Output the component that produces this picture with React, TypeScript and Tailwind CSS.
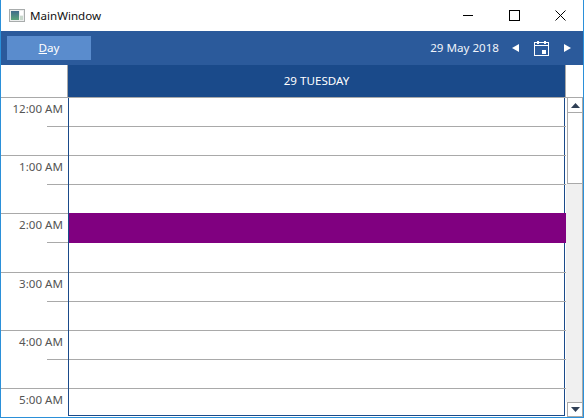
import React from 'react'

// Row heights come from the screenshot: the grid lines are not evenly spaced
const rows = [
  { h: 28, label: '12:00 AM', line: 'half' },
  { h: 28, line: 'hour' },
  { h: 28, label: '1:00 AM', line: 'half' },
  { h: 28, line: 'event' },
  { h: 28, label: '2:00 AM', event: true, line: 'eventHalf' },
  { h: 29, line: 'hour' },
  { h: 28, label: '3:00 AM', line: 'half' },
  { h: 28, line: 'hour' },
  { h: 28, label: '4:00 AM', line: 'half' },
  { h: 28, line: 'hour' },
  { h: 26, label: '5:00 AM' },
]

function WindowIcon() {
  return (
    <svg width="16" height="13" viewBox="0 0 16 13">
      <defs>
        <linearGradient id="pane" x1="0" y1="0" x2="0" y2="1">
          <stop offset="0" stopColor="#3f6a8c" />
          <stop offset="1" stopColor="#5aa37a" />
        </linearGradient>
      </defs>
      <rect x="0.5" y="0.5" width="15" height="12" fill="#eceeee" stroke="#a8acac" />
      <rect x="2" y="2" width="8" height="9" fill="url(#pane)" />
      <rect x="11" y="2" width="3" height="4" fill="#ffffff" />
      <rect x="11" y="7" width="3" height="4" fill="#c8d8cc" />
    </svg>
  )
}

function CalendarIcon() {
  return (
    <svg width="15" height="15" viewBox="0 0 15 15" fill="none">
      <rect x="0.5" y="1.5" width="14" height="13" stroke="#ffffff" />
      <path d="M0 4.5 H15" stroke="#ffffff" />
      <rect x="3" y="0" width="2" height="3" fill="#ffffff" />
      <rect x="10" y="0" width="2" height="3" fill="#ffffff" />
      <rect x="8" y="9" width="4" height="4" fill="#ffffff" />
    </svg>
  )
}

function Arrow({ dir }: { dir: 'left' | 'right' }) {
  return (
    <svg width="7" height="8" viewBox="0 0 7 8" className="block">
      <polygon points={dir === 'left' ? '7,0 7,8 0,4' : '0,0 0,8 7,4'} fill="#ffffff" />
    </svg>
  )
}

function ScrollGlyph({ up }: { up?: boolean }) {
  return (
    <svg width="9" height="5" viewBox="0 0 9 5">
      <polygon points={up ? '4.5,0 9,5 0,5' : '0,0 9,0 4.5,5'} fill="#2f3f55" />
    </svg>
  )
}

function GridLine({ kind }: { kind: string }) {
  const half = kind === 'half' || kind === 'eventHalf'
  const purple = kind === 'event' || kind === 'eventHalf'
  return (
    <div className="flex h-px">
      <div className={half ? 'ml-[46px] w-[21px] bg-[#a9a9a9]' : 'w-[67px] bg-[#a9a9a9]'} />
      <div className="w-px bg-[#1a4a8a]" />
      <div className={`flex-1 ${purple ? 'bg-[#800080]' : 'bg-[#a9a9a9]'}`} />
    </div>
  )
}

export default function App() {
  return (
    <div className="flex flex-col w-[584px] h-[418px] overflow-hidden bg-white border-x border-b border-[#2b90d9] font-['Noto_Sans',sans-serif] text-[11.6px]">
      {/* Title bar */}
      <div className="flex items-center h-[31px] shrink-0 pl-[8px]">
        <WindowIcon />
        <span className="ml-[5px] text-[#111]">MainWindow</span>
        <div className="flex items-center ml-auto">
          <div className="flex items-center justify-center w-[46px] h-[31px]">
            <div className="w-[10px] h-px bg-black" />
          </div>
          <div className="flex items-center justify-center w-[46px] h-[31px]">
            <div className="w-[11px] h-[11px] border border-black" />
          </div>
          <div className="flex items-center justify-center w-[46px] h-[31px]">
            <svg width="11" height="11" viewBox="0 0 11 11">
              <path d="M0.5 0.5 L10.5 10.5 M10.5 0.5 L0.5 10.5" stroke="#000" strokeWidth="1" />
            </svg>
          </div>
        </div>
      </div>

      {/* Toolbar */}
      <div className="flex items-center h-[34px] shrink-0 bg-[#2b5a9b] pl-[6px] pr-[12px] text-white">
        <div className="flex items-center justify-center w-[84px] h-[24px] bg-[#5a8ccd]">
          <span><span className="underline">D</span>ay</span>
        </div>
        <span className="ml-auto text-[#f0f4fa]">29 May 2018</span>
        <div className="ml-[13px]"><Arrow dir="left" /></div>
        <div className="ml-[15px]"><CalendarIcon /></div>
        <div className="ml-[15px]"><Arrow dir="right" /></div>
      </div>

      {/* Day header */}
      <div className="flex h-[33px] shrink-0 border-b border-[#a9a9a9]">
        <div className="w-[67px] border-r border-[#a9a9a9]" />
        <div className="flex items-center justify-center w-[497px] bg-[#1a4a8a] text-white">29 TUESDAY</div>
        <div className="w-px bg-[#a9a9a9]" />
      </div>

      {/* Body */}
      <div className="flex flex-1 min-h-0">
        <div className="w-[565px] shrink-0">
          {rows.map((r, i) => (
            <div key={i}>
              <div className="flex" style={{ height: r.h }}>
                <div className="w-[67px] pr-[5px] pt-[2px] text-right leading-[17px] text-[#555]">{r.label}</div>
                {r.event ? (
                  <div className="w-[498px] border-l border-[#1a4a8a] bg-[#800080]" />
                ) : (
                  <div className="w-[497px] border-x border-[#1a4a8a]" />
                )}
              </div>
              {r.line && <GridLine kind={r.line} />}
            </div>
          ))}
          <div className="ml-[67px] w-[497px] h-px bg-[#1a4a8a]" />
        </div>

        {/* Scrollbar */}
        <div className="flex flex-col w-[17px] shrink-0 bg-[#f0f0f0] border-r border-[#a9a9a9]">
          <div className="bg-white pl-px">
            <div className="flex items-center justify-center h-[15px] border-l border-b border-[#a9a9a9]">
              <ScrollGlyph up />
            </div>
            <div className="h-[71px] border-l border-b border-[#a9a9a9]" />
          </div>
          <div className="flex-1" />
          <div className="bg-white pl-px">
            <div className="flex items-center justify-center h-[15px] border-l border-t border-b border-[#a9a9a9]">
              <ScrollGlyph />
            </div>
          </div>
        </div>
      </div>
    </div>
  )
}
